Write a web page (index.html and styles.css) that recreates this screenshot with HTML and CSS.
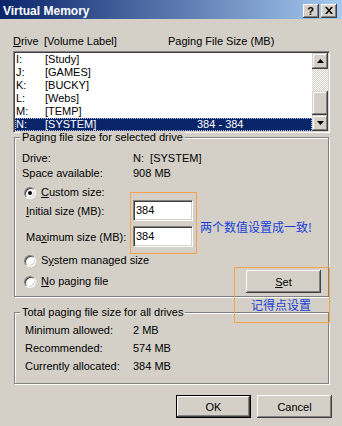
FILE: index.html
```html
<!DOCTYPE html>
<html lang="en">
<head>
  <meta charset="UTF-8">
  <meta name="viewport" content="width=device-width, initial-scale=1.0">
  <link rel="stylesheet" href="styles.css">
  <title>Virtual Memory</title>
</head>
<body>

  <div class="window">
    <div class="titlebar">
      <span class="title">Virtual Memory</span>
      <div class="caption-buttons">
        <span class="cap-btn help">?</span>
        <span class="cap-btn close">
          <svg width="8" height="7" viewBox="0 0 8 7"><path d="M0 0h2l2 2.4 2-2.4h2L5 3.5 8 7H6L4 4.6 2 7H0l3-3.5z"/></svg>
        </span>
      </div>
    </div>

    <div class="dialog-body">
      <div class="list-head">
        <span><u>D</u>rive</span>
        <span>[Volume Label]</span>
        <span>Paging File Size (MB)</span>
      </div>

      <div class="listbox">
        <ul class="drives">
          <li><span>I:</span><span>[Study]</span><span></span></li>
          <li><span>J:</span><span>[GAMES]</span><span></span></li>
          <li><span>K:</span><span>[BUCKY]</span><span></span></li>
          <li><span>L:</span><span>[Webs]</span><span></span></li>
          <li><span>M:</span><span>[TEMP]</span><span></span></li>
          <li class="selected"><span>N:</span><span>[SYSTEM]</span><span>384 - 384</span></li>
        </ul>
        <div class="scrollbar">
          <div class="sb-btn"><svg width="7" height="4" viewBox="0 0 7 4"><path d="M3.5 0L7 4H0z"/></svg></div>
          <div class="sb-track"></div>
          <div class="sb-thumb"></div>
          <div class="sb-btn"><svg width="7" height="4" viewBox="0 0 7 4"><path d="M0 0h7L3.5 4z"/></svg></div>
        </div>
      </div>

      <fieldset class="group group-drive">
        <legend>Paging file size for selected drive</legend>
        <div class="info">
          <span>Drive:</span><span class="pre">N:  [SYSTEM]</span>
          <span>Space available:</span><span>908 MB</span>
        </div>

        <div class="radio-row custom-row"><span class="radio checked"></span><span><u>C</u>ustom size:</span></div>
        <div class="size-row first"><span><u>I</u>nitial size (MB):</span><span class="textbox">384</span></div>
        <div class="size-row"><span>Ma<u>x</u>imum size (MB):</span><span class="textbox">384</span></div>
        <div class="radio-row system-row"><span class="radio"></span><span>S<u>y</u>stem managed size</span></div>

        <div class="last-row">
          <div class="radio-row"><span class="radio"></span><span><u>N</u>o paging file</span></div>
          <button class="btn"><u>S</u>et</button>
        </div>
      </fieldset>

      <fieldset class="group group-total">
        <legend>Total paging file size for all drives</legend>
        <div class="totals">
          <span>Minimum allowed:</span><span>2 MB</span>
          <span>Recommended:</span><span>574 MB</span>
          <span>Currently allocated:</span><span>384 MB</span>
        </div>
      </fieldset>

      <div class="actions">
        <button class="btn default">OK</button>
        <button class="btn">Cancel</button>
      </div>
    </div>

    <!-- annotations drawn over the dialog -->
    <div class="mark mark-sizes"></div>
    <div class="mark mark-set"></div>
    <span class="note note-match">两个数值设置成一致!</span>
    <span class="note note-set">记得点设置</span>
  </div>

</body>
</html>
```

FILE: styles.css
```css
body {
  margin: 0;
  font-family: "Liberation Sans", Arial, sans-serif;
  font-size: 11px;
  color: #000;
}

.window {
  position: relative;
  width: 342px;
  height: 426px;
  background: #d4d0c8;
  overflow: hidden;
}

/* title bar */
.titlebar {
  height: 19px;
  box-sizing: border-box;
  padding: 4px 5px 0 3px;
  display: flex;
  justify-content: space-between;
  align-items: flex-start;
  background: linear-gradient(to right, #0a246a, #a6caf0);
}

.title {
  color: #fff;
  font-weight: bold;
  font-size: 12px;
  line-height: 14px;
}

.caption-buttons {
  display: flex;
  gap: 2px;
}

.cap-btn {
  width: 16px;
  height: 14px;
  display: flex;
  align-items: center;
  justify-content: center;
  background: #d4d0c8;
  box-shadow: inset -1px -1px #404040, inset 1px 1px #fff, inset -2px -2px #808080, inset 2px 2px #d4d0c8;
}

.help {
  font-weight: bold;
  font-size: 11px;
  line-height: 14px;
  padding-right: 1px;
  box-sizing: border-box;
}

.close svg {
  margin-left: -1px;
  margin-top: -1px;
}

/* dialog content */
.dialog-body {
  padding: 16px 10px 0 13px;
}

.list-head {
  display: grid;
  grid-template-columns: 31px 124px auto;
  line-height: 13px;
}

.listbox {
  margin-top: 3px;
  width: 317px;
  height: 82px;
  box-sizing: border-box;
  display: flex;
  background: #fff;
  border: 1px solid;
  border-color: #808080 #fff #fff #808080;
  box-shadow: inset 1px 1px #404040, inset -1px -1px #d4d0c8;
  padding: 1px;
}

.drives {
  list-style: none;
  margin: 0;
  padding: 0;
  flex: 1;
}

.drives li {
  display: grid;
  grid-template-columns: 29px 152px auto;
  height: 13px;
  line-height: 13px;
  padding-left: 1px;
}

.drives li.selected {
  background: #0a246a;
  color: #fff;
  outline: 1px dotted #b8c4e0;
  outline-offset: -1px;
}

.scrollbar {
  width: 16px;
  display: flex;
  flex-direction: column;
}

.sb-btn,
.sb-thumb {
  background: #d4d0c8;
  box-shadow: inset -1px -1px #404040, inset 1px 1px #d4d0c8, inset -2px -2px #808080, inset 2px 2px #fff;
}

.sb-btn {
  height: 16px;
  display: flex;
  align-items: center;
  justify-content: center;
}

.sb-track {
  height: 22px;
  background: repeating-conic-gradient(#fff 0 25%, #d4d0c8 0 50%) 0 0 / 2px 2px;
}

.sb-thumb {
  flex: 1;
}

/* group boxes */
.group {
  margin: -2px 0 0 1px;
  width: 315px;
  box-sizing: border-box;
  min-width: 0;
  padding: 0 7px 3px 0;
  border: 1px solid #808080;
  box-shadow: inset 1px 1px #fff, 1px 1px #fff;
}

.group legend {
  margin-left: 5px;
  padding: 0 2px;
  line-height: 13px;
  background: #d4d0c8;
}

.info {
  margin-top: 7px;
  padding-left: 7px;
  display: grid;
  grid-template-columns: 111px auto;
  line-height: 15px;
}

.pre {
  white-space: pre;
}

.radio-row {
  display: flex;
  align-items: center;
  gap: 5px;
  padding-left: 9px;
  height: 13px;
  line-height: 13px;
}

.custom-row {
  margin-top: 5px;
}

.system-row {
  margin-top: 7px;
}

.radio {
  width: 12px;
  height: 12px;
  box-sizing: border-box;
  border-radius: 50%;
  background: #fff;
  border: 1px solid;
  border-color: #808080 #fff #fff #808080;
  box-shadow: inset 1px 1px #404040, inset -1px -1px #d4d0c8;
  display: flex;
  align-items: center;
  justify-content: center;
}

.radio.checked::after {
  content: "";
  width: 4px;
  height: 4px;
  border-radius: 50%;
  background: #000;
}

.size-row {
  display: grid;
  grid-template-columns: 107px 60px;
  align-items: center;
  padding-left: 11px;
  height: 21px;
  margin-top: 5px;
}

.size-row.first {
  margin-top: 1px;
}

.textbox {
  height: 21px;
  box-sizing: border-box;
  background: #fff;
  border: 1px solid;
  border-color: #808080 #fff #fff #808080;
  box-shadow: inset 1px 1px #404040, inset -1px -1px #d4d0c8;
  padding: 2px 0 0 2px;
  line-height: 15px;
  font-size: 11px;
}

.last-row {
  margin-top: 3px;
  display: flex;
  justify-content: space-between;
  align-items: center;
}

.group-total {
  margin-top: 9px;
  padding-bottom: 8px;
}

.totals {
  padding: 2px 0 0 10px;
  display: grid;
  grid-template-columns: 108px auto;
  line-height: 18px;
}

/* push buttons */
.btn {
  width: 75px;
  height: 23px;
  padding: 0;
  font-family: inherit;
  font-size: 11px;
  color: #000;
  border: none;
  background: #d4d0c8;
  box-shadow: inset -1px -1px #404040, inset 1px 1px #fff, inset -2px -2px #808080, inset 2px 2px #d4d0c8;
}

.btn.default {
  box-shadow: inset 0 0 0 1px #000, inset -2px -2px #404040, inset 2px 2px #fff, inset -3px -3px #808080;
}

.actions {
  margin-top: 11px;
  display: flex;
  justify-content: flex-end;
  gap: 6px;
}

/* orange highlight boxes and notes */
.mark {
  position: absolute;
  box-sizing: border-box;
  border: 1px solid #f7a24b;
}

.mark-sizes {
  left: 130px;
  top: 192px;
  width: 67px;
  height: 62px;
}

.mark-set {
  left: 234px;
  top: 267px;
  width: 96px;
  height: 56px;
}

.note {
  position: absolute;
  font-family: "Noto Sans CJK SC", sans-serif;
  font-size: 12px;
  line-height: 16px;
  color: #1840d8;
}

.note-match {
  left: 200px;
  top: 219px;
}

.note-set {
  left: 251px;
  top: 297px;
}
```
